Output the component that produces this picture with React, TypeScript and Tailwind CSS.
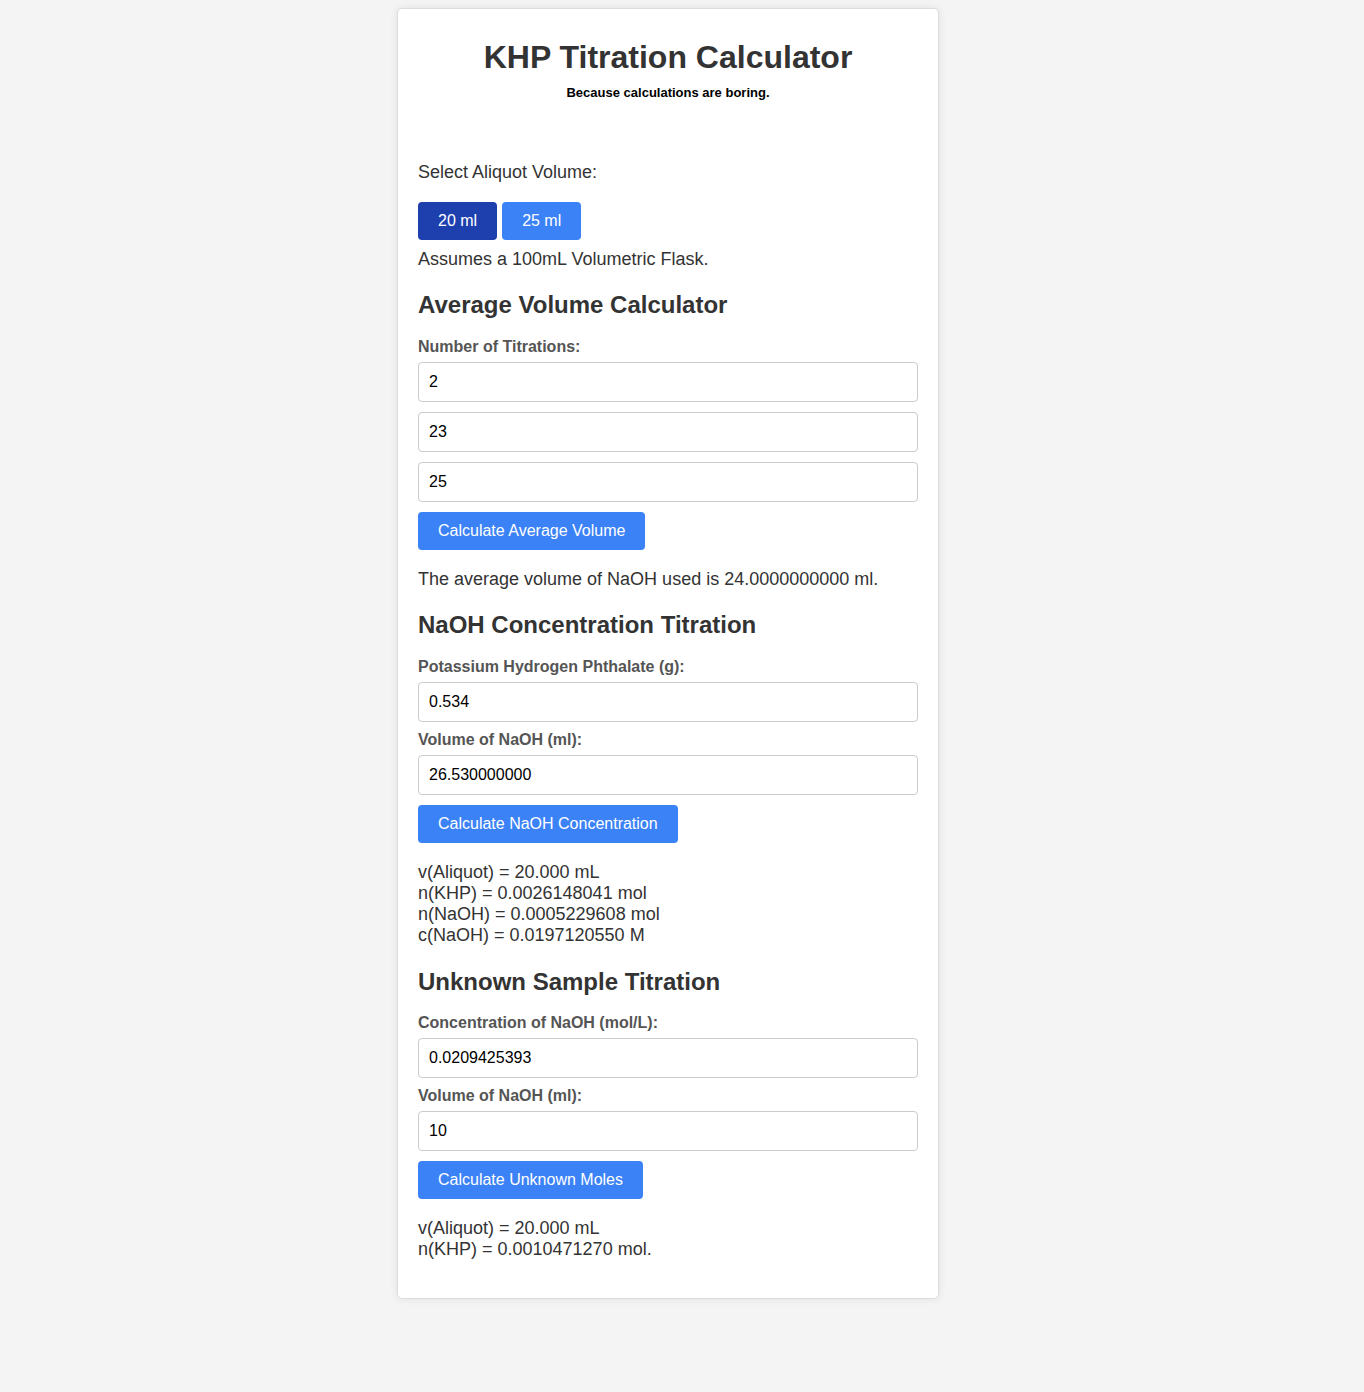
import React, { useState } from 'react';

const font = { fontFamily: '"Liberation Sans", Arial, Helvetica, sans-serif' };

const Label: React.FC<{ text: string; className?: string }> = ({ text, className = '' }) => (
  <label className={`block text-[16px] leading-[18px] font-bold text-[#555] ${className}`}>{text}</label>
);

const Field: React.FC<{ value: string; onChange: (v: string) => void; className?: string }> = ({ value, onChange, className = '' }) => (
  <input
    value={value}
    onChange={(e) => onChange(e.target.value)}
    className={`block w-full h-10 px-[10px] border border-[#ccc] rounded-[4px] text-[16px] text-black bg-white outline-none ${className}`}
  />
);

const BlueButton: React.FC<{ text: string; onClick?: () => void; className?: string }> = ({ text, onClick, className = '' }) => (
  <button
    onClick={onClick}
    className={`block px-5 py-[10px] text-[16px] leading-[18px] text-white bg-[#3b82f6] rounded-[4px] cursor-pointer ${className}`}
  >
    {text}
  </button>
);

const App: React.FC = () => {
  const [aliquot, setAliquot] = useState<number>(20);
  const [count, setCount] = useState('2');
  const [vols, setVols] = useState<string[]>(['23', '25']);
  const [avgText, setAvgText] = useState('The average volume of NaOH used is 24.0000000000 ml.');

  const [khpMass, setKhpMass] = useState('0.534');
  const [naohVol, setNaohVol] = useState('26.530000000');
  const [concLines, setConcLines] = useState<string[]>([
    'v(Aliquot) = 20.000 mL',
    'n(KHP) = 0.0026148041 mol',
    'n(NaOH) = 0.0005229608 mol',
    'c(NaOH) = 0.0197120550 M',
  ]);

  const [unkConc, setUnkConc] = useState('0.0209425393');
  const [unkVol, setUnkVol] = useState('10');
  const [unkLines, setUnkLines] = useState<string[]>(['v(Aliquot) = 20.000 mL', 'n(KHP) = 0.0010471270 mol.']);

  // average of the titration volumes
  const calcAverage = () => {
    const nums = vols.map(parseFloat).filter((n) => !isNaN(n));
    if (!nums.length) return;
    const avg = nums.reduce((a, b) => a + b, 0) / nums.length;
    setAvgText(`The average volume of NaOH used is ${avg.toFixed(10)} ml.`);
  };

  const calcConcentration = () => {
    const nKhp = parseFloat(khpMass) / 204.22;
    const nNaoh = nKhp * (aliquot / 100);
    const c = nNaoh / (parseFloat(naohVol) / 1000);
    setConcLines([
      `v(Aliquot) = ${aliquot.toFixed(3)} mL`,
      `n(KHP) = ${nKhp.toFixed(10)} mol`,
      `n(NaOH) = ${nNaoh.toFixed(10)} mol`,
      `c(NaOH) = ${c.toFixed(10)} M`,
    ]);
  };

  const calcUnknown = () => {
    const n = parseFloat(unkConc) * (parseFloat(unkVol) / 1000) * (100 / aliquot);
    setUnkLines([`v(Aliquot) = ${aliquot.toFixed(3)} mL`, `n(KHP) = ${n.toFixed(10)} mol.`]);
  };

  const changeCount = (v: string) => {
    setCount(v);
    const n = parseInt(v);
    if (!isNaN(n) && n > 0 && n < 20) {
      setVols((prev) => Array.from({ length: n }, (_, i) => prev[i] ?? ''));
    }
  };

  return (
    <div className="min-h-screen bg-[#f4f4f4] pt-2 pb-20 flex justify-center pr-[28px]" style={font}>
      <div className="w-[542px] self-start bg-white border border-[#dcdcdc] rounded-[5px] shadow-[0_0_8px_rgba(0,0,0,0.08)] px-5 pt-[30px] pb-[38px] text-[#333]">
        <h1 className="text-center text-[32px] leading-[37px] font-bold text-[#333]">KHP Titration Calculator</h1>
        <p className="mt-[9px] text-center text-[13px] leading-[15px] font-bold text-black">Because calculations are boring.</p>

        <p className="mt-[62px] text-[18px] leading-[21px]">Select Aliquot Volume:</p>
        <div className="mt-[19px] flex gap-[5px]">
          {[20, 25].map((v) => (
            <button
              key={v}
              onClick={() => setAliquot(v)}
              className={
                aliquot === v
                  ? 'px-5 py-[10px] text-[16px] leading-[18px] text-white bg-[#1e40af] rounded-[4px] cursor-pointer'
                  : 'px-5 py-[10px] text-[16px] leading-[18px] text-white bg-[#3b82f6] rounded-[4px] cursor-pointer'
              }
            >
              {v} ml
            </button>
          ))}
        </div>
        <p className="mt-[9px] text-[18px] leading-[21px]">Assumes a 100mL Volumetric Flask.</p>

        <h2 className="mt-[21px] text-[24px] leading-[28px] font-bold">Average Volume Calculator</h2>
        <Label text="Number of Titrations:" className="mt-[19px]" />
        <Field value={count} onChange={changeCount} className="mt-[6px]" />
        {vols.map((v, i) => (
          <Field
            key={i}
            value={v}
            onChange={(nv) => setVols((prev) => prev.map((p, j) => (j === i ? nv : p)))}
            className="mt-[10px]"
          />
        ))}
        <BlueButton text="Calculate Average Volume" onClick={calcAverage} className="mt-[10px]" />
        <p className="mt-[19px] text-[18px] leading-[21px]">{avgText}</p>

        <h2 className="mt-[21px] text-[24px] leading-[28px] font-bold">NaOH Concentration Titration</h2>
        <Label text="Potassium Hydrogen Phthalate (g):" className="mt-[19px]" />
        <Field value={khpMass} onChange={setKhpMass} className="mt-[6px]" />
        <Label text="Volume of NaOH (ml):" className="mt-[9px]" />
        <Field value={naohVol} onChange={setNaohVol} className="mt-[6px]" />
        <BlueButton text="Calculate NaOH Concentration" onClick={calcConcentration} className="mt-[10px]" />
        <div className="mt-[19px] text-[18px] leading-[21px]">
          {concLines.map((l) => (
            <p key={l}>{l}</p>
          ))}
        </div>

        <h2 className="mt-[22px] text-[24px] leading-[28px] font-bold">Unknown Sample Titration</h2>
        <Label text="Concentration of NaOH (mol/L):" className="mt-[18px]" />
        <Field value={unkConc} onChange={setUnkConc} className="mt-[6px]" />
        <Label text="Volume of NaOH (ml):" className="mt-[9px]" />
        <Field value={unkVol} onChange={setUnkVol} className="mt-[6px]" />
        <BlueButton text="Calculate Unknown Moles" onClick={calcUnknown} className="mt-[10px]" />
        <div className="mt-[19px] text-[18px] leading-[21px]">
          {unkLines.map((l) => (
            <p key={l}>{l}</p>
          ))}
        </div>
      </div>
    </div>
  );
};

export default App;
